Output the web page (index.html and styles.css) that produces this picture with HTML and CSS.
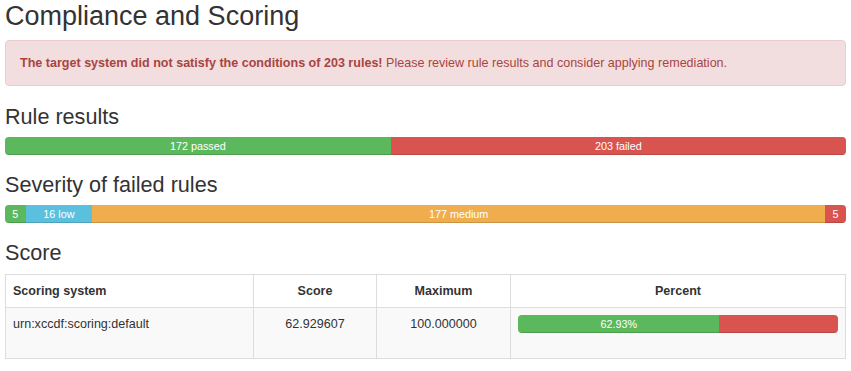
FILE: index.html
```html
<!DOCTYPE html>
<html lang="en">
<head>
  <meta charset="UTF-8">
  <meta name="viewport" content="width=device-width, initial-scale=1.0">
  <title>Compliance and Scoring</title>
  <link rel="stylesheet" href="styles.css">
</head>
<body>
  <div class="container">
    <h2>Compliance and Scoring</h2>
    <div class="alert alert-danger">
      <strong>The target system did not satisfy the conditions of 203 rules!</strong> Please review rule results and consider applying remediation.
    </div>

    <h3>Rule results</h3>
    <div class="progress">
      <div class="progress-bar bar-success" style="width: 45.8667%">172 passed</div>
      <div class="progress-bar bar-danger" style="width: 54.1333%">203 failed</div>
    </div>

    <h3>Severity of failed rules</h3>
    <div class="progress">
      <div class="progress-bar bar-success" style="width: 2.4631%">5</div>
      <div class="progress-bar bar-info" style="width: 7.8818%">16 low</div>
      <div class="progress-bar bar-warning" style="width: 87.1921%">177 medium</div>
      <div class="progress-bar bar-danger" style="width: 2.4631%">5</div>
    </div>

    <h3 class="score-title">Score</h3>
    <table class="table">
      <colgroup>
        <col class="col-system">
        <col class="col-score">
        <col class="col-max">
        <col class="col-percent">
      </colgroup>
      <thead>
        <tr>
          <th>Scoring system</th>
          <th class="center">Score</th>
          <th class="center">Maximum</th>
          <th class="center">Percent</th>
        </tr>
      </thead>
      <tbody>
        <tr>
          <td>urn:xccdf:scoring:default</td>
          <td class="center">62.929607</td>
          <td class="center">100.000000</td>
          <td>
            <div class="progress">
              <div class="progress-bar bar-success" style="width: 62.93%">62.93%</div>
              <div class="progress-bar bar-danger" style="width: 37.07%"></div>
            </div>
          </td>
        </tr>
      </tbody>
    </table>
  </div>
</body>
</html>
```

FILE: styles.css
```css
body { font-family: "Liberation Sans", Arial, sans-serif; font-size: 12.55px; line-height: 18px; color: #333; background: #fff; margin: 0; padding: 0; }
.container { padding: 0 5px; }
h2, h3 { font-weight: 500; color: #333; }
h2 { font-size: 27px; line-height: 30px; margin: 1px 0 9px; }
h3 { font-size: 21.6px; line-height: 24px; margin: 0 0 8px; }
.score-title { margin-bottom: 9px; }

.alert { padding: 13px 14px; border: 1px solid transparent; border-radius: 4px; margin-bottom: 19px; }
.alert-danger { background: #f2dede; border-color: #ebccd1; color: #a94442; }

.progress { display: flex; height: 18px; overflow: hidden; background: #f5f5f5; border-radius: 4px; box-shadow: inset 0 1px 2px rgba(0,0,0,.1); margin-bottom: 18px; }
.progress-bar { height: 100%; font-size: 10.8px; line-height: 18px; color: #fff; text-align: center; white-space: nowrap; overflow: hidden; box-shadow: inset 0 -1px 0 rgba(0,0,0,.15); }
.bar-success { background: #5cb85c; }
.bar-info { background: #5bc0de; }
.bar-warning { background: #f0ad4e; }
.bar-danger { background: #d9534f; }

.table { width: 100%; border-collapse: collapse; border: 1px solid #ddd; table-layout: fixed; }
.table th, .table td { border: 1px solid #ddd; padding: 7px 7px; vertical-align: top; text-align: left; }
.table th { font-weight: bold; }
.table tbody tr { background: #f9f9f9; }
.table .center { text-align: center; }
.table .progress { margin-bottom: 18px; }
.col-system { width: 248px; }
.col-score { width: 123px; }
.col-max { width: 134px; }
```
